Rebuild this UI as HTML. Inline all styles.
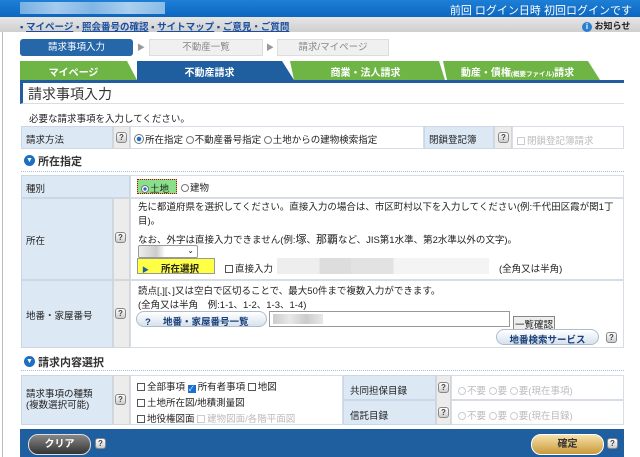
<!DOCTYPE html>
<html><head><meta charset="utf-8"><style>
*{margin:0;padding:0;box-sizing:border-box}
body{width:640px;height:457px;overflow:hidden;background:#fff;font-family:"Liberation Sans","Noto Sans CJK JP",sans-serif;font-size:9.5px;color:#222;position:relative}
.a{position:absolute}
.lbl{background:#dce8f4;border:1px solid #c9d7e6;white-space:nowrap}
.q{background:#ececec;border:1px solid #d6d6d6}
.qi{display:inline-block;width:11px;height:11px;border:1px solid #888;border-radius:3px;background:linear-gradient(#fff,#ccc);font-size:8px;line-height:9px;text-align:center;color:#444;font-weight:bold}
.cell{border:1px solid #d6dde6;background:#fff}
.t{white-space:nowrap}
.rad{display:inline-block;width:8px;height:8px;border:1px solid #777;border-radius:50%;vertical-align:-1px;margin-right:1px;background:#fff}
.rad.on{background:radial-gradient(#1a6fd0 35%,#fff 45%)}
.cb{display:inline-block;width:8px;height:8px;border:1px solid #555;vertical-align:-1px;margin-right:2px;background:#fff}
.dis{color:#bbb}
.dis .rad,.dis .cb{border-color:#ccc}
</style></head><body>
<div class="a" style="left:0;top:0;width:640px;height:17px;background:linear-gradient(#1d7fd6,#0d66bf)"></div>
<div class="a" style="left:20px;top:2px;width:145px;height:12px;background:linear-gradient(90deg,#8fbfe9,#c8e0f5,#9cc6ec,#d0e6f7,#a6ccee);opacity:.8"></div>
<div class="a t" style="right:8px;top:2px;color:#fff;font-size:11px">前回 ログイン日時 初回ログインです</div>
<div class="a" style="left:0;top:17px;width:640px;height:15px;background:linear-gradient(#e6e6e6,#cfcfcf)"></div>
<div class="a t" style="left:20px;top:19px;font-size:9.5px;color:#1a4fa0;font-weight:bold">▪ <u>マイページ</u> ▪ <u>照会番号の確認</u> ▪ <u>サイトマップ</u> ▪ <u>ご意見・ご質問</u></div>
<div class="a t" style="left:582px;top:19px;font-size:9px;font-weight:bold"><span style="display:inline-block;width:10px;height:10px;border-radius:50%;background:#2a7fd0;color:#fff;font-size:8px;text-align:center;line-height:10px">i</span> お知らせ</div>
<div class="a" style="left:2px;top:32px;width:1px;height:425px;background:#bbb"></div>
<!-- steps -->
<div class="a" style="left:20px;top:39px;width:113px;height:17px;background:#2567a8;border-radius:3px;color:#fff;text-align:center;line-height:17px">請求事項入力</div>
<div class="a" style="left:137px;top:42px;color:#999;font-size:8px">▶</div>
<div class="a" style="left:149px;top:39px;width:114px;height:17px;background:#f0f0f0;border:1px solid #ddd;color:#888;text-align:center;line-height:15px">不動産一覧</div>
<div class="a" style="left:266px;top:42px;color:#999;font-size:8px">▶</div>
<div class="a" style="left:277px;top:39px;width:112px;height:17px;background:#f0f0f0;border:1px solid #ddd;color:#888;text-align:center;line-height:15px">請求/マイページ</div>
<!-- tabs -->
<svg class="a" style="left:20px;top:61px" width="604" height="22">
<polygon points="0,0 107,0 117,19 0,19" fill="#6fb545"/>
<polygon points="270,0 419,0 425,19 274,19" fill="#6fb545"/>
<polygon points="423,0 568,0 580,19 427,19" fill="#6fb545"/>
<polygon points="117,0 262,0 274,19 117,19" fill="#1f5fa0"/>
<rect x="0" y="19" width="604" height="3" fill="#1f5fa0"/>
</svg>
<div class="a t" style="left:20px;top:64px;width:107px;text-align:center;color:#fff;font-weight:bold;font-size:10px">マイページ</div>
<div class="a t" style="left:137px;top:64px;width:145px;text-align:center;color:#fff;font-weight:bold;font-size:10px">不動産請求</div>
<div class="a t" style="left:292px;top:64px;width:147px;text-align:center;color:#fff;font-weight:bold;font-size:10px">商業・法人請求</div>
<div class="a t" style="left:445px;top:64px;width:145px;text-align:center;color:#fff;font-weight:bold;font-size:10px">動産・債権<span style="font-size:6.5px">(概要ファイル)</span>請求</div>
<div class="a" style="left:20px;top:83px;width:604px;height:21px;border-left:3px solid #1f5fa0;border-bottom:1px solid #ddd"></div>
<div class="a t" style="left:28px;top:84px;font-size:14px;color:#333">請求事項入力</div>
<div class="a t" style="left:29px;top:111px">必要な請求事項を入力してください。</div>
<!-- row1 -->
<div class="a lbl" style="left:21px;top:126px;width:92px;height:23px;padding:5px 4px">請求方法</div>
<div class="a q" style="left:113px;top:126px;width:17px;height:23px;padding:5px 2px"><span class="qi">?</span></div>
<div class="a cell" style="left:130px;top:126px;width:294px;height:23px;padding:5px 3px"><span class="t"><span class="rad on" style="width:10px;height:10px"></span>所在指定 <span class="rad"></span>不動産番号指定 <span class="rad"></span>土地からの建物検索指定</span></div>
<div class="a lbl" style="left:424px;top:126px;width:70px;height:23px;padding:5px 4px">閉鎖登記簿</div>
<div class="a q" style="left:494px;top:126px;width:18px;height:23px;padding:5px 3px"><span class="qi">?</span></div>
<div class="a cell dis" style="left:512px;top:126px;width:112px;height:23px;padding:6px 4px"><span class="t"><span class="cb"></span>閉鎖登記簿請求</span></div>
<!-- section 1 -->
<div class="a" style="left:24px;top:155px;width:11px;height:11px;border-radius:50%;background:#1d6fc2;color:#fff;font-size:7px;text-align:center;line-height:11px">▼</div>
<div class="a t" style="left:38px;top:153px;font-size:11px;font-weight:bold;color:#333">所在指定</div>
<div class="a" style="left:21px;top:171px;width:603px;border-top:1px dotted #9cc0e0"></div>
<div class="a lbl" style="left:21px;top:175px;width:109px;height:23px;padding:5px 4px">種別</div>
<div class="a cell" style="left:130px;top:175px;width:494px;height:23px"></div>
<div class="a t" style="left:137px;top:179px;width:40px;height:15px;background:#8ae08a;border:1px dotted #c00;padding:1px 3px"><span class="rad on"></span>土地</div>
<div class="a t" style="left:181px;top:180px"><span class="rad"></span>建物</div>
<div class="a lbl" style="left:21px;top:198px;width:92px;height:82px;padding:34px 4px">所在</div>
<div class="a q" style="left:113px;top:198px;width:17px;height:82px"></div>
<div class="a" style="left:115px;top:232px"><span class="qi">?</span></div>
<div class="a cell" style="left:130px;top:198px;width:494px;height:82px"></div>
<div class="a" style="left:138px;top:201px;width:480px;line-height:14px">先に都道府県を選択してください。直接入力の場合は、市区町村以下を入力してください(例:千代田区霞が関1丁目)。</div>
<div class="a t" style="left:138px;top:231px">なお、外字は直接入力できません(例:<span style="font-size:11px">塚</span>、<span style="font-size:11px">那覇</span>など、JIS第1水準、第2水準以外の文字)。</div>
<div class="a" style="left:138px;top:245px;width:60px;height:13px;border:1px solid #999;border-radius:2px;background:linear-gradient(90deg,#eee,#ccc 30%,#fff 45%);font-size:8px;text-align:right;padding-right:3px">⌄</div>
<div class="a" style="left:137px;top:258px;width:78px;height:16px;background:#ffff44;border:1px solid #999;font-weight:bold;padding:2px 0 0 4px"><span style="color:#1f5fa0;font-size:7px">▶</span><span style="margin-left:12px">所在選択</span></div>
<div class="a t" style="left:225px;top:261px"><span class="cb"></span>直接入力</div>
<div class="a" style="left:277px;top:258px;width:212px;height:16px;background:linear-gradient(90deg,#eee 0,#eee 20%,#ddd 20%,#ddd 35%,#e2e2e2 35%,#e2e2e2 55%,#f4f4f4 55%)"></div>
<div class="a t" style="left:499px;top:261px">(全角又は半角)</div>
<div class="a lbl" style="left:21px;top:280px;width:92px;height:68px;padding:27px 4px">地番・家屋番号</div>
<div class="a q" style="left:113px;top:280px;width:17px;height:68px"></div>
<div class="a" style="left:115px;top:308px"><span class="qi">?</span></div>
<div class="a cell" style="left:130px;top:280px;width:494px;height:68px"></div>
<div class="a t" style="left:138px;top:283px">読点[,][、]又は空白で区切ることで、最大50件まで複数入力ができます。</div>
<div class="a t" style="left:138px;top:297px">(全角又は半角　例:1-1、1-2、1-3、1-4)</div>
<div class="a t" style="left:136px;top:311px;width:131px;height:16px;border-radius:8px;background:linear-gradient(#fff,#d6e2ee);border:1px solid #b0bccb;font-weight:bold;color:#1a3f7a;padding:2px 0 0 8px">?　 地番・家屋番号一覧</div>
<div class="a" style="left:269px;top:311px;width:241px;height:16px;border:1px solid #999;background:#fff"></div>
<div class="a" style="left:273px;top:314px;width:50px;height:10px;background:linear-gradient(90deg,#ccc,#e8e8e8,#ccc,#e8e8e8)"></div>
<div class="a t" style="left:513px;top:316px;border:1px solid #888;background:#eee;padding:0 1px">一覧確認</div>
<div class="a t" style="left:496px;top:329px;width:103px;height:16px;border-radius:8px;background:linear-gradient(#fff,#d6e2ee);border:1px solid #b0bccb;font-weight:bold;color:#1a3f7a;text-align:center;padding-top:2px">地番検索サービス</div>
<div class="a" style="left:606px;top:332px"><span class="qi">?</span></div>
<!-- section 2 -->
<div class="a" style="left:24px;top:356px;width:11px;height:11px;border-radius:50%;background:#1d6fc2;color:#fff;font-size:7px;text-align:center;line-height:11px">▼</div>
<div class="a t" style="left:38px;top:354px;font-size:11px;font-weight:bold;color:#333">請求内容選択</div>
<div class="a" style="left:21px;top:370px;width:603px;border-top:1px dotted #9cc0e0"></div>
<div class="a lbl" style="left:21px;top:375px;width:92px;height:50px;padding:13px 4px;line-height:11px">請求事項の種類<br>(複数選択可能)</div>
<div class="a q" style="left:113px;top:375px;width:17px;height:50px"></div>
<div class="a" style="left:115px;top:394px"><span class="qi">?</span></div>
<div class="a cell" style="left:130px;top:375px;width:213px;height:50px"></div>
<div class="a t" style="left:137px;top:379px"><span class="cb"></span>全部事項 <span class="cb" style="background:#1a6fd0;border-color:#1a6fd0;color:#fff;font-size:7px;line-height:7px">✓</span>所有者事項 <span class="cb"></span>地図</div>
<div class="a t" style="left:137px;top:395px"><span class="cb"></span>土地所在図/地積測量図</div>
<div class="a t" style="left:137px;top:411px"><span class="cb"></span>地役権図面 <span class="dis"><span class="cb"></span>建物図面/各階平面図</span></div>
<div class="a lbl" style="left:343px;top:375px;width:93px;height:25px;padding:7px 6px">共同担保目録</div>
<div class="a lbl" style="left:343px;top:400px;width:93px;height:25px;padding:7px 6px">信託目録</div>
<div class="a q" style="left:436px;top:375px;width:15px;height:50px"></div>
<div class="a" style="left:438px;top:382px"><span class="qi">?</span></div>
<div class="a" style="left:438px;top:407px"><span class="qi">?</span></div>
<div class="a cell dis" style="left:451px;top:375px;width:173px;height:25px;padding:7px 6px"><span class="t"><span class="rad"></span>不要 <span class="rad"></span>要 <span class="rad"></span>要(現在事項)</span></div>
<div class="a cell dis" style="left:451px;top:400px;width:173px;height:25px;padding:7px 6px"><span class="t"><span class="rad"></span>不要 <span class="rad"></span>要 <span class="rad"></span>要(現在目録)</span></div>
<!-- footer -->
<div class="a" style="left:20px;top:429px;width:604px;height:28px;background:#1f5fa0"></div>
<div class="a" style="left:28px;top:434px;width:63px;height:21px;border-radius:10px;background:linear-gradient(#888,#333);border:1px solid #ddd;color:#fff;font-weight:bold;font-size:10px;text-align:center;line-height:19px">クリア</div>
<div class="a" style="left:95px;top:438px"><span class="qi">?</span></div>
<div class="a" style="left:531px;top:434px;width:73px;height:21px;border-radius:10px;background:linear-gradient(#f6e2a8,#c9993a);border:1px solid #fff;color:#333;font-weight:bold;font-size:10px;text-align:center;line-height:19px">確定</div>
<div class="a" style="left:607px;top:438px"><span class="qi">?</span></div>
</body></html>
